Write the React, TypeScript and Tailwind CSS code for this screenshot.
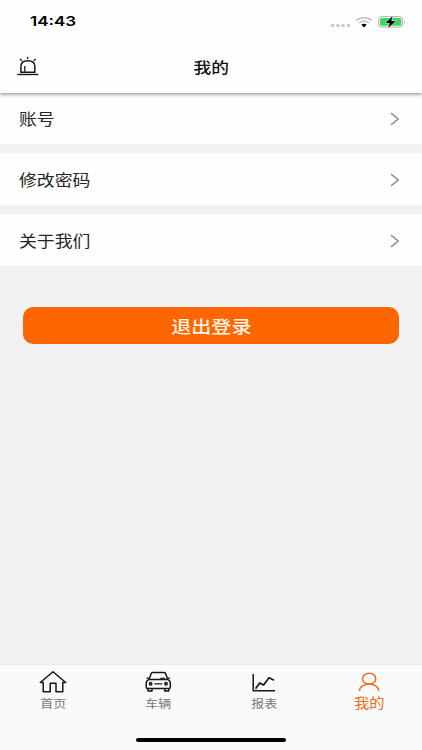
import type { ReactNode } from 'react';

const menuItems = ['账号', '修改密码', '关于我们'];

function StatusBar() {
  return (
    <div className="flex h-[42px] items-center justify-between pt-px pr-[16px] pl-[30px]">
      <span className="origin-left scale-x-[1.26] font-[Inter] text-[13.5px] font-semibold text-black">14:43</span>
      <svg width="76" height="16" viewBox="330 13.5 76 16" fill="none">
        <g fill="#c9c9c9">
          <circle cx="332.6" cy="25" r="1.8" />
          <circle cx="337.9" cy="25" r="1.8" />
          <circle cx="343.1" cy="25" r="1.8" />
          <circle cx="348.4" cy="25" r="1.8" />
        </g>
        <path d="M356.3 19.8Q364 14.4 371.7 19.8" stroke="#c4c4c4" strokeWidth="1.8" />
        <path d="M359.2 22.3Q364 19 368.8 22.3" stroke="#c4c4c4" strokeWidth="1.6" />
        <path d="M361.3 24.2Q364 22.2 366.7 24.2L364 27Z" fill="#000" />
        <rect x="378.6" y="16.2" width="24" height="10.4" rx="3" stroke="#a3a3a3" strokeWidth="0.9" />
        <rect x="380" y="17.5" width="21.2" height="7.8" rx="1.6" fill="#3fd362" />
        <path d="M404 19.5Q405.6 21.4 404 23.3Z" fill="#999" />
        <path
          d="M392.6 15.6L385.6 22.4H389.6L388.2 27.4L395.6 20.4H391.4Z"
          fill="#000"
          stroke="#fff"
          strokeWidth="0.8"
          paintOrder="stroke"
        />
      </svg>
    </div>
  );
}

function Header() {
  return (
    <header className="relative h-[93px] shrink-0 bg-[#fefefe] shadow-[0_1px_4px_rgba(0,0,0,0.5)]">
      <StatusBar />
      <div className="grid h-[50px] grid-cols-3 items-center">
        <svg className="ml-[16px]" width="24" height="20" viewBox="16 57 24 20" fill="none" stroke="#171717">
          <path d="M20.9 72.2V66.2C20.9 62.4 23.6 60.7 27.8 60.7S34.8 62.4 34.8 66.2V72.2Z" strokeWidth="1.5" />
          <path d="M17.3 74.5H38.3" strokeWidth="1.4" />
          <path d="M24.8 66V71.8M27.7 57.1V58.9M20 59L21.9 60.8M35.6 59L33.7 60.8" strokeWidth="1.3" />
        </svg>
        <h1 className="scale-x-[1.16] text-center text-[15.3px] leading-none font-medium text-[#111]">我的</h1>
      </div>
    </header>
  );
}

function MenuRow({ label }: { label: string }) {
  return (
    <button type="button" className="flex h-[52px] items-center justify-between bg-[#fefefe] pt-px pr-[22px] pl-[18.5px]">
      <span className="origin-left scale-x-[1.16] text-[15.4px] leading-none text-[#252525]">{label}</span>
      <svg width="10" height="14" viewBox="0 0 10 14" fill="none" stroke="#919191" strokeWidth="1.6">
        <path d="M1 1.2L8.2 7L1 12.8" />
      </svg>
    </button>
  );
}

interface TabProps {
  label: string;
  active?: boolean;
  children: ReactNode;
}

function Tab({ label, active, children }: TabProps) {
  return (
    <button type="button" className="flex flex-1 flex-col items-center pt-[5px]">
      <svg
        width="30"
        height="24"
        viewBox="0 0 30 24"
        fill="none"
        stroke={active ? '#f26a1b' : '#171717'}
        strokeWidth="1.5"
        strokeLinejoin="round">
        {children}
      </svg>
      {active ? (
        <span className="mt-[2px] scale-x-[1.16] text-[13.2px] leading-none text-[#f26a1b]">{label}</span>
      ) : (
        <span className="mt-[4px] scale-x-[1.16] text-[11.2px] leading-none text-[#777]">{label}</span>
      )}
    </button>
  );
}

function TabBar() {
  return (
    <nav className="flex h-[86px] shrink-0 flex-col border-t border-[#e9e9e9] bg-[#fafafa]">
      <div className="flex h-[72.5px]">
        <Tab label="首页">
          <path d="M2.3 12.5L15 1.8L27.7 12.5H24.8V21.7H18V13.2H12.2V21.7H5.2V12.5Z" />
        </Tab>
        <Tab label="车辆">
          <path d="M6 9.4L8.2 3.6Q8.6 2.6 10 2.6H20.8Q22.2 2.6 22.6 3.6L24.8 9.4" />
          <path d="M5.8 9.4H24.8Q27.3 11 27.3 13.3V17.2Q27.3 18.4 26 18.4H4.6Q3.2 18.4 3.2 17.2V13.3Q3.2 11 5.8 9.4Z" />
          <path d="M5 18.6V21H9V18.6M21.7 18.6V21H25.8V18.6" />
          <path d="M11.4 13.8H19.3M3.4 8.2H5.8M24.8 8.2H27.2M17.4 9Q19.2 7.4 22 8.6" strokeWidth="1.2" />
          <circle cx="7.6" cy="13.7" r="1.2" />
          <circle cx="23" cy="13.7" r="1.2" />
        </Tab>
        <Tab label="报表">
          <path d="M4.2 4V20.8H26" />
          <path d="M6.5 18.8L10.8 13L14.6 15L20 7.8L25 10.3" strokeWidth="1.7" />
        </Tab>
        <Tab label="我的" active>
          <ellipse cx="15.1" cy="8.7" rx="6.7" ry="5.4" />
          <path d="M5.4 21.1C5.8 16.7 10 14.1 15.1 14.1S24.4 16.7 24.8 21.1" />
        </Tab>
      </div>
      <div className="mx-auto h-[4.5px] w-[150px] rounded-full bg-black" />
    </nav>
  );
}

export default function App() {
  return (
    <div className="flex h-[750px] w-[422px] flex-col overflow-hidden bg-[#f1f1f1] font-['Noto_Sans_CJK_SC',sans-serif]">
      <Header />
      <main className="-mt-px flex-1">
        <div className="flex flex-col gap-[9px]">
          {menuItems.map(label => (
            <MenuRow key={label} label={label} />
          ))}
        </div>
        <button
          type="button"
          className="mx-[23px] mt-[41px] flex h-[36.5px] w-[376px] items-center justify-center rounded-[10px] bg-[#ff6600]">
          <span className="scale-x-[1.17] text-[17.2px] leading-none font-medium text-[#fff4e8]">退出登录</span>
        </button>
      </main>
      <TabBar />
    </div>
  );
}
